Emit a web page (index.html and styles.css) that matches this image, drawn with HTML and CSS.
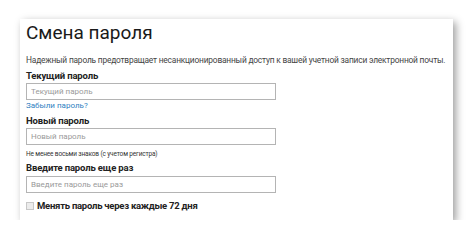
FILE: index.html
```html
<!DOCTYPE html>
<html lang="ru">
<head>
    <meta charset="UTF-8">
    <title>Смена пароля</title>
    <link rel="stylesheet" href="styles.css">
</head>
<body>
    <div class="card">
        <h1 class="title">Смена пароля</h1>
        <p class="intro">Надежный пароль предотвращает несанкционированный доступ к вашей учетной записи электронной почты.</p>

        <label class="label" for="current">Текущий пароль</label>
        <input class="field" id="current" type="password" placeholder="Текущий пароль">
        <a class="forgot" href="#">Забыли пароль?</a>

        <label class="label" for="new">Новый пароль</label>
        <input class="field" id="new" type="password" placeholder="Новый пароль">
        <div class="hint">Не менее восьми знаков (с учетом регистра)</div>

        <label class="label" for="repeat">Введите пароль еще раз</label>
        <input class="field" id="repeat" type="password" placeholder="Введите пароль еще раз">

        <label class="check">
            <span class="box"></span>
            Менять пароль через каждые 72 дня
        </label>
    </div>
</body>
</html>
```

FILE: styles.css
```css
body {
    margin: 0;
    background: #fff;
    font-family: Roboto, 'Liberation Sans', sans-serif;
    color: #222;
}
.card {
    box-sizing: border-box;
    width: 433px;
    height: 201px;
    margin: 19px 0 0 20px;
    padding: 2px 6px 0;
    background: #fff;
    box-shadow: 3px 3px 8px rgba(0, 0, 0, 0.38);
}
.title {
    margin: 0;
    font-size: 19px;
    line-height: 24px;
    font-weight: 400;
    color: #1a1a1a;
}
.intro {
    margin: 9px 0 3px;
    font-size: 8.4px;
    line-height: 12px;
    letter-spacing: -0.2px;
    color: #444;
    white-space: nowrap;
}
.label {
    display: block;
    font-size: 9.5px;
    line-height: 14px;
    letter-spacing: -0.15px;
    font-weight: 700;
    color: #222;
}
.field {
    display: block;
    box-sizing: border-box;
    width: 250px;
    height: 17px;
    margin: 0;
    padding: 0 4px;
    border: 1px solid #b4b4b4;
    font-family: inherit;
    font-size: 8px;
}
.field::placeholder {
    color: #9a9a9a;
}
.forgot {
    display: block;
    margin-bottom: 2px;
    font-size: 8px;
    line-height: 12px;
    color: #2f7fc1;
    text-decoration: none;
}
#repeat {
    margin-top: 1px;
}
.hint {
    margin: 4px 0 2px;
    font-size: 6.5px;
    line-height: 10px;
    letter-spacing: -0.15px;
    color: #333;
}
.check {
    display: flex;
    align-items: center;
    gap: 3px;
    margin-top: 6px;
    font-size: 9.5px;
    line-height: 14px;
    letter-spacing: -0.25px;
    font-weight: 700;
}
.box {
    width: 6px;
    height: 6px;
    border: 1px solid #c8c8c8;
    background: #ececec;
}
```
